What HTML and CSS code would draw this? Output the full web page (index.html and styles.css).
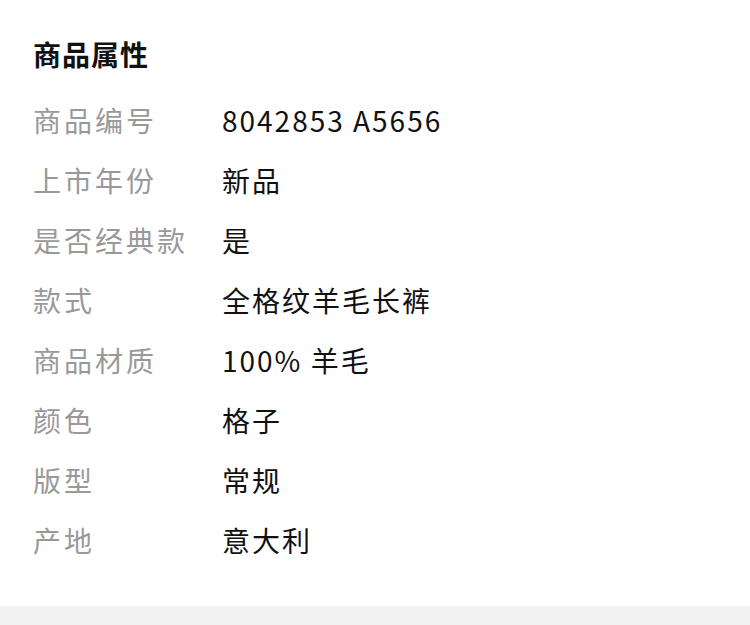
FILE: index.html
```html
<!DOCTYPE html>
<html lang="zh-CN">
<head>
<meta charset="utf-8">
<link rel="stylesheet" href="styles.css">
</head>
<body>
<section class="attrs">
  <h2 class="title">商品属性</h2>
  <dl class="list">
    <div class="row"><dt>商品编号</dt><dd>8042853 A5656</dd></div>
    <div class="row"><dt>上市年份</dt><dd>新品</dd></div>
    <div class="row"><dt>是否经典款</dt><dd>是</dd></div>
    <div class="row"><dt>款式</dt><dd>全格纹羊毛长裤</dd></div>
    <div class="row"><dt>商品材质</dt><dd>100% 羊毛</dd></div>
    <div class="row"><dt>颜色</dt><dd>格子</dd></div>
    <div class="row"><dt>版型</dt><dd>常规</dd></div>
    <div class="row"><dt>产地</dt><dd>意大利</dd></div>
  </dl>
</section>
<div class="footer-bar"></div>
</body>
</html>
```
FILE: styles.css
```css
html, body {
  margin: 0;
  padding: 0;
  background: #fff;
}
body {
  width: 750px;
  height: 625px;
  overflow: hidden;
  font-family: "Noto Sans CJK SC", "Noto Sans", sans-serif;
}
.attrs {
  padding: 32px 33px 0 33px;
  height: 574px;
}
.title {
  margin: 0;
  font-size: 28px;
  font-weight: 700;
  line-height: 44px;
  color: #111;
  letter-spacing: 1px;
}
.list {
  margin: 14px 0 0 0;
}
.row {
  display: flex;
  height: 60px;
  align-items: center;
}
.row dt {
  width: 189px;
  font-size: 28px;
  color: #999;
  letter-spacing: 3px;
}
.row dd {
  margin: 0;
  font-size: 28px;
  color: #111;
  letter-spacing: 2px;
}
.footer-bar {
  height: 19px;
  background: #f2f2f2;
}
```
